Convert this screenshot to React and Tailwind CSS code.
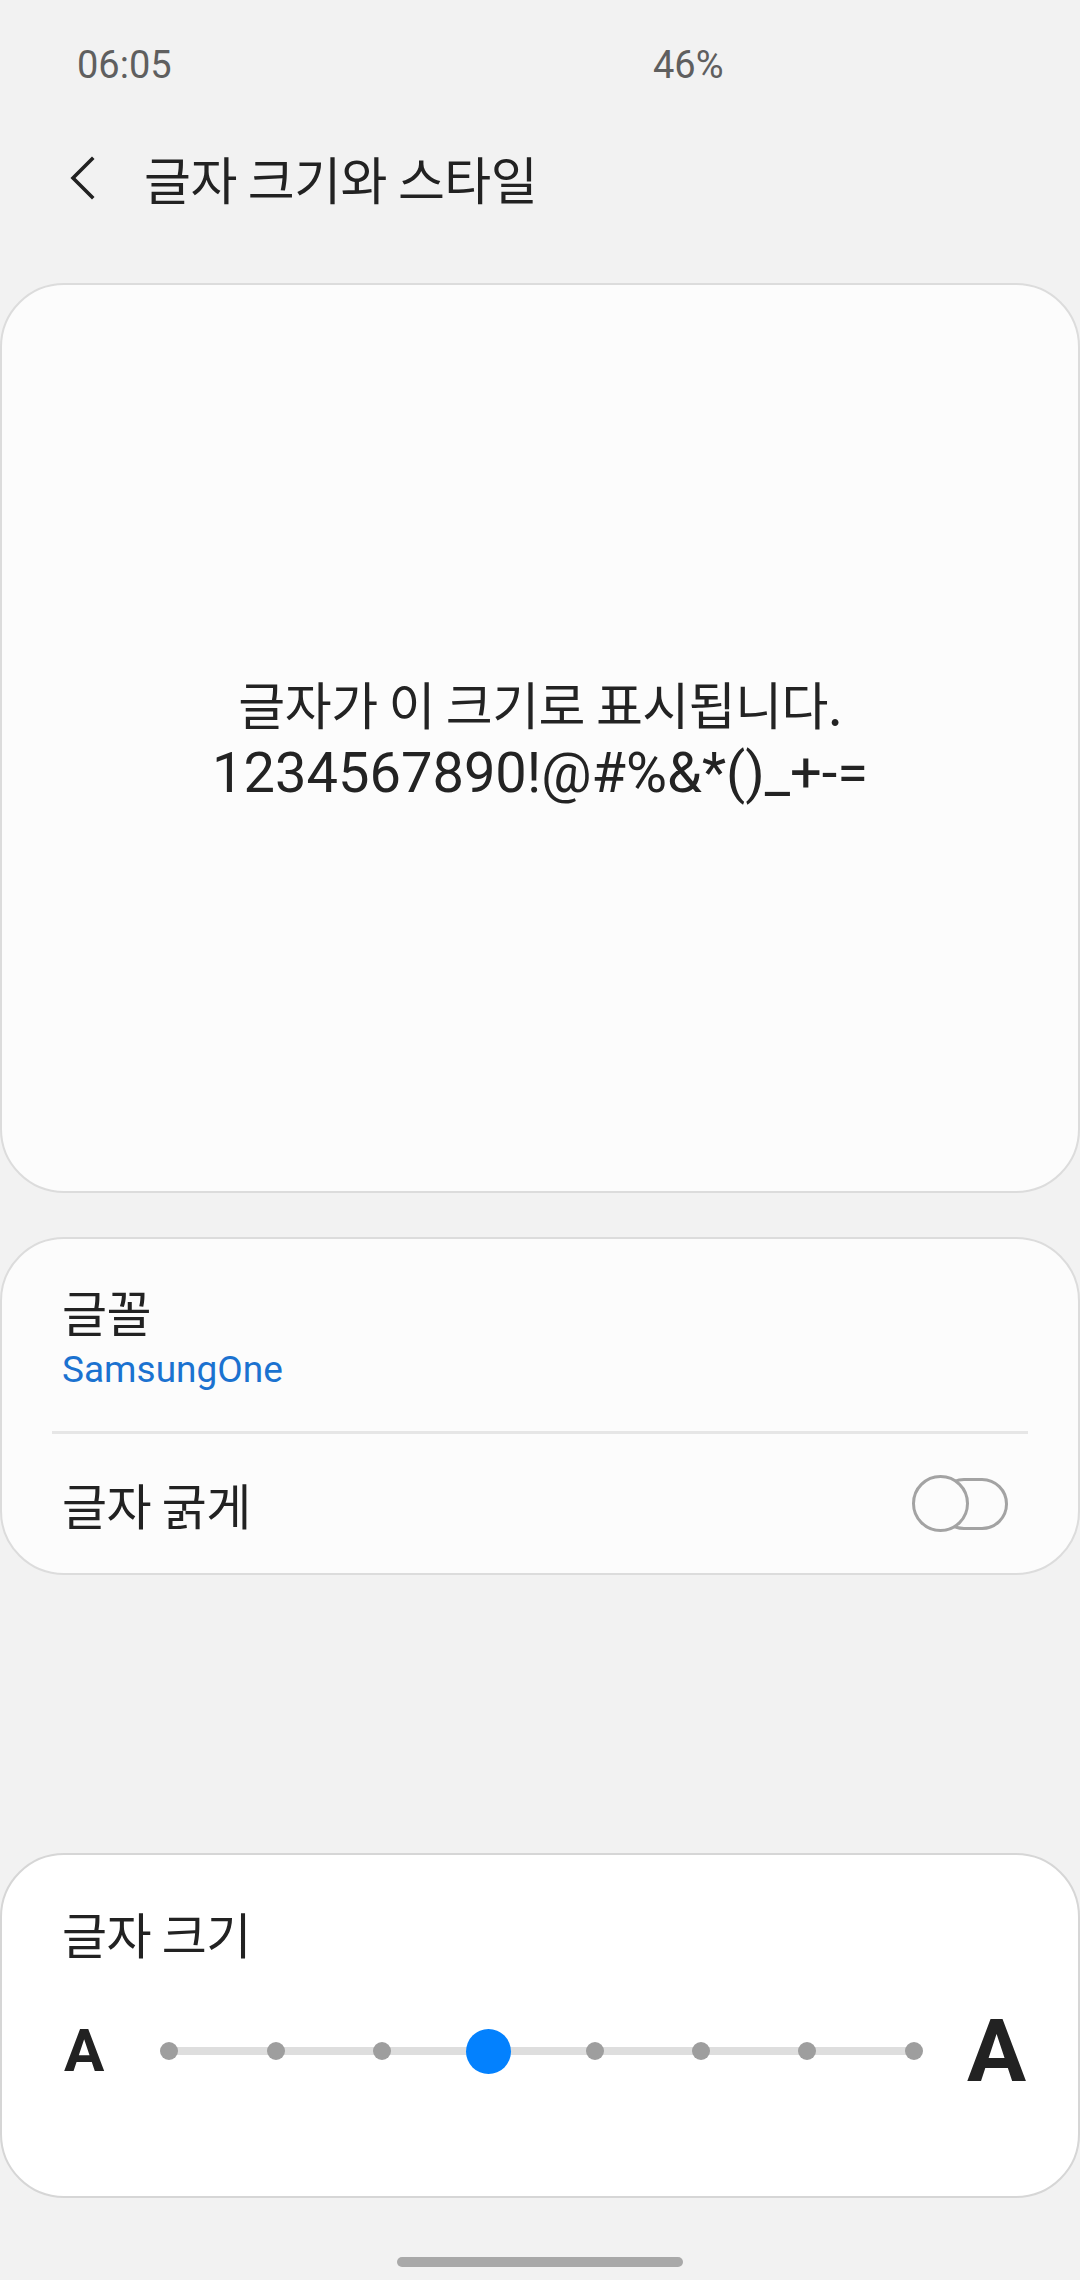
import React from 'react';

const ko = { fontFamily: '"Noto Sans CJK KR", "Noto Sans", sans-serif' };
const latin = { fontFamily: 'Roboto, "Noto Sans", sans-serif' };

const steps = [0, 1, 2, 3, 4, 5, 6, 7];
const current = 3;

function Toggle() {
  return (
    <div className="relative w-[96px] h-[57px] flex items-center">
      <div className="ml-[26px] w-[70px] h-[52px] rounded-full border-[3px] border-[#a3a3a3]"></div>
      <div className="absolute left-0 top-0 w-[57px] h-[57px] rounded-full border-[3px] border-[#a3a3a3] bg-[#fcfcfc]"></div>
    </div>
  );
}

function SizeSlider() {
  return (
    <div className="flex items-center pl-[62px] h-[90px]">
      <div className="w-[52px] text-[60px] leading-none font-bold text-[#222]" style={latin}>A</div>
      <div className="relative w-[851px] h-[50px]">
        {/* track */}
        <div className="absolute left-[53px] right-[53px] top-[21px] h-[8px] bg-[#dedede]"></div>
        <div className="relative grid grid-cols-8 h-full">
          {steps.map(i => (
            <div key={i} className="flex items-center justify-center">
              {i === current ? (
                <div className="w-[45px] h-[45px] rounded-full bg-[#0381fe]"></div>
              ) : (
                <div className="w-[18px] h-[18px] rounded-full bg-[#9e9e9e]"></div>
              )}
            </div>
          ))}
        </div>
      </div>
      <div className="text-[88px] leading-none font-bold text-[#222]" style={latin}>A</div>
    </div>
  );
}

export default function App() {
  return (
    <div className="w-[1080px] h-[2280px] bg-[#f2f2f2] flex flex-col overflow-hidden">
      {/* status bar */}
      <div className="h-[130px] flex items-center pl-[77px] text-[38px] text-[#5f5f5f]" style={latin}>
        <span className="w-[576px]">06:05</span>
        <span>46%</span>
      </div>

      {/* header */}
      <div className="h-[96px] flex items-center pl-[68px]">
        <svg width="28" height="44" viewBox="0 0 28 44" fill="none">
          <path d="M24 3 L5 22 L24 41" stroke="#222" strokeWidth="3.6" strokeLinecap="square" strokeLinejoin="miter" />
        </svg>
        <h1 className="ml-[48px] text-[51px] leading-[60px] text-[#222] tracking-[-0.01em]" style={ko}>글자 크기와 스타일</h1>
      </div>

      {/* preview */}
      <div className="mt-[57px] h-[910px] w-full rounded-[64px] border-2 border-[#dcdcdc] bg-[#fcfcfc] flex flex-col items-center justify-center text-[#232323]">
        <p className="text-[51px] leading-[70px] tracking-[-0.01em]" style={ko}>글자가 이 크기로 표시됩니다.</p>
        <p className="text-[56px] leading-[70px]" style={latin}>1234567890!@#%&amp;*()_+-=</p>
      </div>

      {/* font options */}
      <div className="mt-[44px] h-[338px] w-full rounded-[64px] border-2 border-[#dcdcdc] bg-[#fcfcfc] flex flex-col">
        <div className="px-[60px] pt-[44px] pb-[38px]">
          <p className="text-[49px] leading-[56px] text-[#222] tracking-[-0.01em]" style={ko}>글꼴</p>
          <p className="mt-[8px] text-[37px] leading-[46px] text-[#1b72d0]" style={latin}>SamsungOne</p>
        </div>
        <div className="mx-[50px] h-[3px] bg-[#e6e6e6]"></div>
        <div className="flex-1 flex items-center justify-between pl-[60px] pr-[70px]">
          <p className="text-[49px] leading-[56px] text-[#222] tracking-[-0.01em]" style={ko}>글자 굵게</p>
          <Toggle />
        </div>
      </div>

      {/* font size */}
      <div className="mt-[278px] h-[345px] w-full rounded-[64px] border-2 border-[#d6d6d6] bg-white flex flex-col">
        <p className="pl-[60px] pt-[50px] text-[49px] leading-[56px] text-[#222] tracking-[-0.01em]" style={ko}>글자 크기</p>
        <div className="mt-[45px]">
          <SizeSlider />
        </div>
      </div>

      {/* home indicator */}
      <div className="mt-[59px] mx-auto w-[286px] h-[10px] rounded-full bg-[#a9a9a9]"></div>
    </div>
  );
}
